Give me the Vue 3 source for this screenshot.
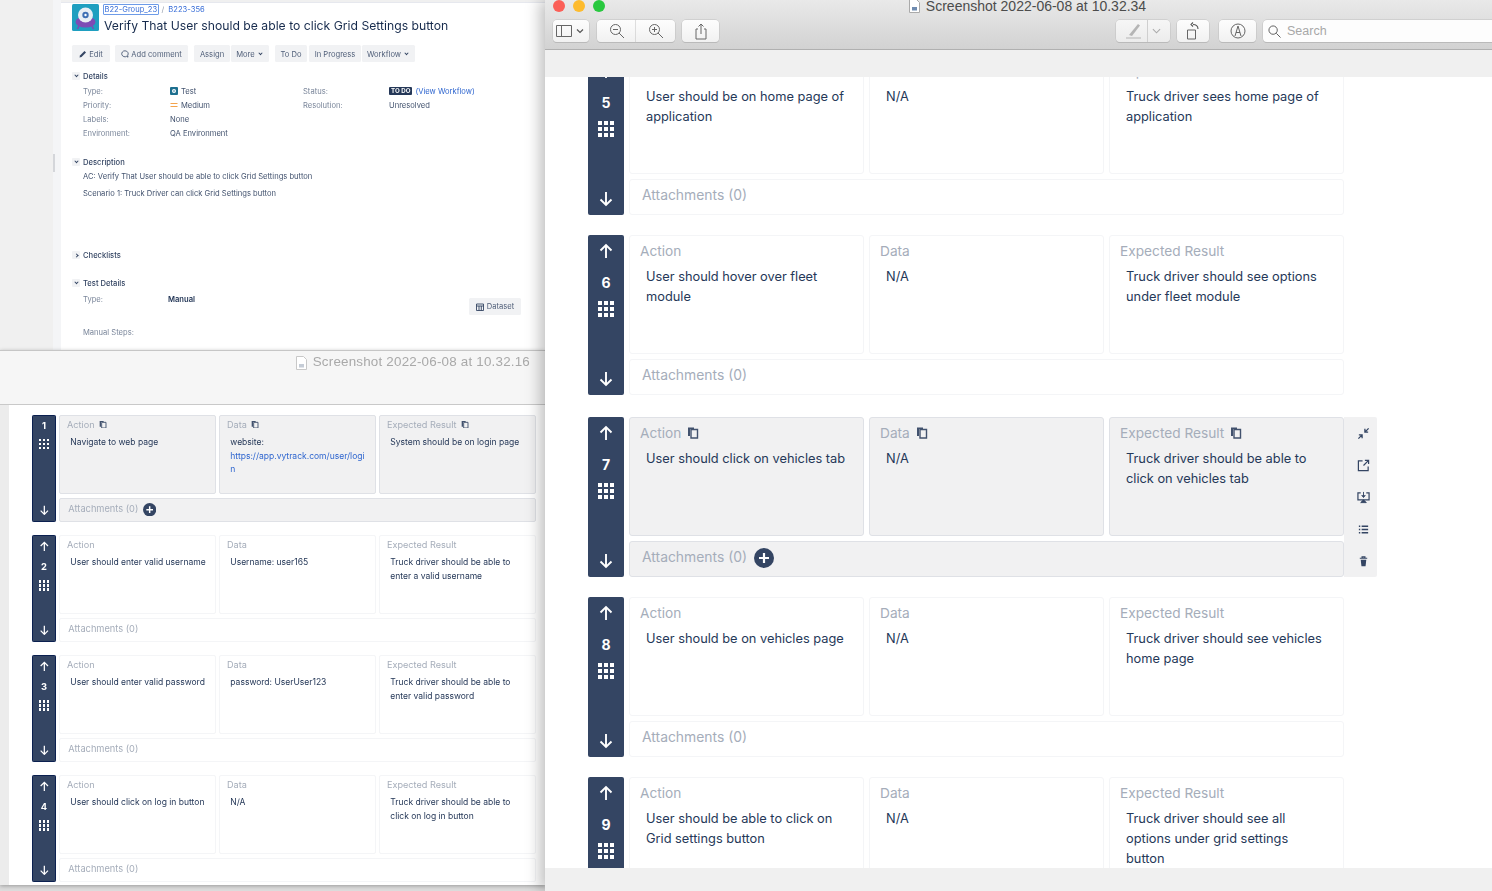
<script setup>
const leftRows = [
  { n: 1, action: 'Navigate to web page', data: 'website:', link: 'https://app.vytrack.com/user/login', result: 'System should be on login page', active: true, first: true },
  { n: 2, action: 'User should enter valid username', data: 'Username: user165', result: 'Truck driver should be able to enter a valid username' },
  { n: 3, action: 'User should enter valid password', data: 'password: UserUser123', result: 'Truck driver should be able to enter valid password' },
  { n: 4, action: 'User should click on log in button', data: 'N/A', result: 'Truck driver should be able to click on log in button' },
]

const rightRows = [
  { n: 5, action: 'User should be on home page of application', data: 'N/A', result: 'Truck driver sees home page of application' },
  { n: 6, action: 'User should hover over fleet module', data: 'N/A', result: 'Truck driver should see options under fleet module' },
  { n: 7, action: 'User should click on vehicles tab', data: 'N/A', result: 'Truck driver should be able to click on vehicles tab', active: true, tools: true },
  { n: 8, action: 'User should be on vehicles page', data: 'N/A', result: 'Truck driver should see vehicles home page' },
  { n: 9, action: 'User should be able to click on Grid settings button', data: 'N/A', result: 'Truck driver should see all options under grid settings button' },
]

const lists = [
  { id: 'left', rows: leftRows },
  { id: 'right', rows: rightRows },
]

const columns = [
  { key: 'action', label: 'Action' },
  { key: 'data', label: 'Data' },
  { key: 'result', label: 'Expected Result' },
]
</script>

<template>
  <div class="desktop">
    <!-- jira issue screenshot -->
    <section class="win jira">
      <div class="jira__gutter"><span class="jira__grip"></span></div>
      <div class="jira__page">
        <header class="issue">
          <svg class="issue__logo" viewBox="0 0 27 27">
            <rect width="27" height="27" rx="1.5" fill="#1f9fc0" />
            <ellipse cx="13.5" cy="18" rx="10" ry="5.5" fill="#7d4cb5" />
            <path d="M7 22l-1.5 3M20 22l1.5 3" stroke="#7d4cb5" stroke-width="1.6" />
            <circle cx="13.5" cy="11" r="7.5" fill="#e9eef5" />
            <circle cx="13.5" cy="11" r="3.2" fill="#3f6fb5" />
            <circle cx="13.5" cy="11" r="1.2" fill="#fff" />
          </svg>
          <div>
            <div class="crumbs">
              <a class="crumbs__focus">B22-Group_23</a>
              <span class="crumbs__sep">/</span>
              <a>B223-356</a>
            </div>
            <h1 class="issue__title">Verify That User should be able to click Grid Settings button</h1>
          </div>
        </header>

        <nav class="actions">
          <span class="btn btn--edit">
            <svg viewBox="0 0 8 8" class="btn__ico"><path d="M0.5 7.5l.5-2L5.5 1l1.5 1.5L2.5 7z" fill="#344563" /></svg>
            Edit
          </span>
          <span class="btn btn--comment">
            <svg viewBox="0 0 8 8" class="btn__ico"><path d="M4 .8a3.2 3 0 1 0 1.7 5.5L7 7.2l-.3-1.8A3.2 3 0 0 0 4 .8z" fill="none" stroke="#344563" stroke-width=".8" /></svg>
            Add comment
          </span>
          <span class="btn btn--assign">Assign</span>
          <span class="btn btn--more">More <i class="chev"></i></span>
          <span class="btn btn--todo">To Do</span>
          <span class="btn btn--prog">In Progress</span>
          <span class="btn btn--flow">Workflow <i class="chev"></i></span>
        </nav>

        <h2 class="sec sec--details"><span class="sec__tog"><i class="chev"></i></span>Details</h2>
        <div class="fields">
          <span class="lbl">Type:</span>
          <span class="val">
            <svg class="type-ico" viewBox="0 0 8 8"><rect width="8" height="8" rx="1" fill="#1d6f8f" /><circle cx="4" cy="4" r="2" fill="#fff" /><circle cx="4" cy="4" r=".8" fill="#1d6f8f" /></svg>
            Test
          </span>
          <span class="lbl">Status:</span>
          <span class="val"><b class="lozenge">TO DO</b> <a class="link">(View Workflow)</a></span>
          <span class="lbl">Priority:</span>
          <span class="val">
            <svg class="type-ico" viewBox="0 0 8 8"><path d="M0.5 2.5h7M0.5 5.5h7" stroke="#f4a34c" stroke-width="1.2" /></svg>
            Medium
          </span>
          <span class="lbl">Resolution:</span>
          <span class="val">Unresolved</span>
          <span class="lbl">Labels:</span>
          <span class="val val--wide">None</span>
          <span class="lbl">Environment:</span>
          <span class="val val--wide">QA Environment</span>
        </div>

        <h2 class="sec sec--desc"><span class="sec__tog"><i class="chev"></i></span>Description</h2>
        <p class="desc">AC: Verify That User should be able to click Grid Settings button</p>
        <p class="desc desc--2">Scenario 1: Truck Driver can click Grid Settings button</p>

        <h2 class="sec sec--check"><span class="sec__tog"><i class="chev chev--right"></i></span>Checklists</h2>
        <h2 class="sec sec--test"><span class="sec__tog"><i class="chev"></i></span>Test Details</h2>
        <div class="test-row">
          <span class="lbl test-row__lbl">Type:</span>
          <b class="test-row__val">Manual</b>
          <span class="dataset">
            <svg viewBox="0 0 8 8" class="btn__ico"><path d="M.5 1h7v6.5h-7zM.5 3h7M3 3v4.5M5.3 3v4.5" fill="none" stroke="#344563" stroke-width=".9" /></svg>
            Dataset
          </span>
        </div>
        <div class="lbl steps-lbl">Manual Steps:</div>
      </div>
      <span class="jira__tab"></span>
    </section>

    <template v-for="list in lists" :key="list.id">
      <section class="win" :class="list.id === 'left' ? 'left' : 'preview'">
        <template v-if="list.id === 'left'">
          <div class="left__bar">
            <svg class="file" viewBox="0 0 11 14"><path d="M.5.5h7l3 3v10H.5z" fill="#fff" stroke="#c8c8c8" /><rect x="3" y="8" width="5" height="3.5" fill="#c5ccd6" /></svg>
            Screenshot 2022-06-08 at 10.32.16
          </div>
        </template>
        <template v-else>
          <div class="mac">
            <div class="mac__title">
              <i class="light light--r"></i><i class="light light--y"></i><i class="light light--g"></i>
              <svg class="file file--dark" viewBox="0 0 11 14"><path d="M.5.5h7l3 3v10H.5z" fill="#fff" stroke="#aaa" /><rect x="3" y="8" width="5" height="3.5" fill="#6f8bb0" /></svg>
              <span>Screenshot 2022-06-08 at 10.32.34</span>
            </div>
            <div class="mac__tools">
              <span class="tool tool--side">
                <svg viewBox="0 0 30 14" width="30" height="14"><path d="M.5 1.5h15v11H.5zM5.5 1.5v11" fill="none" stroke="#666" /><path d="M21 5.5l3 3 3-3" fill="none" stroke="#555" stroke-width="1.2" /></svg>
              </span>
              <span class="tool tool--zoom">
                <svg viewBox="0 0 16 16" width="16" height="16"><circle cx="6.5" cy="6.5" r="5" fill="none" stroke="#666" /><path d="M10 10l5 5M4 6.5h5" stroke="#666" /></svg>
              </span>
              <span class="tool tool--zoom tool--joined">
                <svg viewBox="0 0 16 16" width="16" height="16"><circle cx="6.5" cy="6.5" r="5" fill="none" stroke="#666" /><path d="M10 10l5 5M4 6.5h5M6.5 4v5" stroke="#666" /></svg>
              </span>
              <span class="tool tool--share">
                <svg viewBox="0 0 14 17" width="14" height="17"><path d="M4 6H2v10h10V6h-2M7 11V1M4.5 3.500L7 1l2.500 2.500" fill="none" stroke="#666" /></svg>
              </span>
              <span class="mac__space"></span>
              <span class="tool tool--pen">
                <svg viewBox="0 0 18 16" width="18" height="16"><path d="M4 12L13 1l2 1.5L7 13z" fill="#b5b5b5" /><path d="M1 15h15" stroke="#c4c4c4" stroke-width="1.4" /></svg>
                <i class="tool__split"></i>
                <svg viewBox="0 0 10 6" width="9" height="6"><path d="M1 1l4 4 4-4" fill="none" stroke="#aaa" stroke-width="1.2" /></svg>
              </span>
              <span class="tool tool--rotate">
                <svg viewBox="0 0 16 18" width="16" height="18"><path d="M2.500 8h8v9h-8z" fill="none" stroke="#666" /><path d="M13 7c0-3-2-4.500-5-4.500M8 .5l-2 2 2 2" fill="none" stroke="#555" stroke-width="1.100" /></svg>
              </span>
              <span class="tool tool--markup">
                <svg viewBox="0 0 16 16" width="16" height="16"><circle cx="8" cy="8" r="7" fill="none" stroke="#666" /><path d="M5 13L8 3l3 10M6 9.500h4" fill="none" stroke="#666" /></svg>
              </span>
              <span class="search">
                <svg viewBox="0 0 14 14" width="13" height="13"><circle cx="5.500" cy="5.500" r="4.500" fill="none" stroke="#555" /><path d="M9 9l4.500 4.500" stroke="#555" /></svg>
                Search
              </span>
            </div>
          </div>
          <div class="mac__strip"></div>
        </template>

        <!-- test steps -->
        <div class="viewport">
          <div class="steps" :class="'steps--' + list.id">
            <article
              v-for="row in list.rows"
              :key="row.n"
              class="row"
              :class="{ row_active: row.active }"
            >
              <div class="rail">
                <svg v-if="!row.first" class="rail__arrow" viewBox="0 0 16 16"><path d="M8 15V2M2.500 7.500L8 2l5.500 5.500" fill="none" stroke="#fff" stroke-width="1.900" /></svg>
                <span class="rail__num">{{ row.n }}</span>
                <span class="dots"><i v-for="d in 9" :key="d"></i></span>
                <svg class="rail__arrow rail__arrow_down" viewBox="0 0 16 16"><path d="M8 1v13M2.500 8.500L8 14l5.500-5.500" fill="none" stroke="#fff" stroke-width="1.900" /></svg>
              </div>
              <div class="row__main">
                <div class="cells">
                  <div v-for="col in columns" :key="col.key" class="cell">
                    <div class="cell__label">
                      {{ col.label }}
                      <svg v-if="row.active" class="copy" viewBox="0 0 12 13">
                        <path d="M1 1.500h6v1.500H3v7H1z" fill="#42526e" />
                        <path d="M4 3.500h6.500v8.500H4z" fill="none" stroke="#42526e" stroke-width="1.400" />
                      </svg>
                    </div>
                    <div class="cell__text">
                      {{ row[col.key] }}
                      <a v-if="col.key === 'data' && row.link" class="cell__link">{{ row.link }}</a>
                    </div>
                  </div>
                </div>
                <div class="attach">
                  Attachments (0)
                  <svg v-if="row.active" class="attach__add" viewBox="0 0 20 20">
                    <circle cx="10" cy="10" r="10" fill="#344563" />
                    <path d="M10 5v10M5 10h10" stroke="#fff" stroke-width="2.200" />
                  </svg>
                </div>
              </div>
              <aside v-if="row.tools" class="panel">
                <svg viewBox="0 0 14 14"><path d="M8.500 5.500l4-4M8.500 2v3.500H12M5.500 8.500l-4 4M2 8.500h3.500V12" fill="none" stroke="#344563" stroke-width="1.400" /></svg>
                <svg viewBox="0 0 14 14"><path d="M6 2H1.500v10.500H12V8M7 7l5.500-5.500M8.500 1.500h4v4" fill="none" stroke="#344563" stroke-width="1.300" /></svg>
                <svg viewBox="0 0 14 14"><path d="M4 2H1v7.500h12V2h-3" fill="none" stroke="#344563" stroke-width="1.300" /><path d="M7 1v5M5 4.500L7 7l2-2.500M4 12.500h6L7 9.500z" fill="#344563" stroke="#344563" /></svg>
                <svg viewBox="0 0 14 14"><path d="M5 3.500h7M5 7h7M5 10.500h7M2 3.500h1.500M2 7h1.500M2 10.500h1.500" stroke="#344563" stroke-width="1.500" /></svg>
                <svg viewBox="0 0 14 14"><path d="M3 3.500h8M5.500 3.500V2h3v1.500" fill="none" stroke="#344563" stroke-width="1.300" /><path d="M4 5h6l-.8 7H4.800z" fill="#344563" /></svg>
              </aside>
            </article>
          </div>
        </div>
      </section>
    </template>
  </div>
</template>

<style>
html,
body {
  margin: 0;
  overflow: hidden;
}
</style>

<style scoped>
.desktop {
  position: relative;
  width: 1492px;
  height: 891px;
  overflow: hidden;
  background: #dcdcdc;
  font-family: Inter, "Liberation Sans", sans-serif;
  color: #253858;
}

.win {
  position: absolute;
  overflow: hidden;
}

/* jira */
.jira {
  left: 0;
  top: 0;
  width: 545px;
  height: 351px;
  display: flex;
  background: #f0f0f0;
  padding-left: 53px;
  box-sizing: border-box;
  filter: blur(0.35px);
}

.jira__gutter {
  width: 8px;
  background: #f4f5f7;
  position: relative;
  flex: none;
}

.jira__grip {
  position: absolute;
  left: 0;
  top: 154px;
  width: 2px;
  height: 18px;
  background: #d4d6da;
}

.jira__page {
  flex: 1;
  background: #fff;
  margin-top: 2px;
  border-top: 1px solid #e6e8ee;
  padding-left: 11px;
  padding-right: 24px;
  font-size: 7.6px;
  color: #42526e;
}

.jira__tab {
  position: absolute;
  left: 432px;
  bottom: 0;
  width: 63px;
  height: 1px;
  background: #2b4f9e;
}

.issue {
  display: flex;
  gap: 5px;
  height: 27px;
  padding-top: 1px;
}

.issue__logo {
  width: 27px;
  height: 27px;
  flex: none;
}

.crumbs {
  display: flex;
  align-items: center;
  gap: 3px;
  height: 11px;
  font-size: 7.6px;
  color: #3a6fd8;
  margin-left: -1px;
}

.crumbs__focus {
  border: 1px solid #6d9be8;
  padding: 0 0.5px;
  line-height: 9px;
  border-radius: 1px;
}

.crumbs__sep {
  color: #97a0af;
  margin-right: 1px;
}

.issue__title {
  margin: 3px 0 0;
  font-size: 12.2px;
  font-weight: 400;
  line-height: 16px;
  color: #172b4d;
  white-space: nowrap;
}

.actions {
  display: flex;
  margin-top: 14px;
  height: 17px;
}

.btn {
  display: flex;
  align-items: center;
  justify-content: center;
  gap: 2px;
  height: 17px;
  padding-top: 1px;
  background: #f1f2f4;
  border-radius: 1.5px;
  color: #505f79;
  box-sizing: border-box;
}

.btn--edit { width: 38px; }
.btn--comment { width: 73px; margin-left: 5px; }
.btn--assign { width: 36px; margin-left: 6px; }
.btn--more { width: 38px; margin-left: 1px; }
.btn--todo { width: 32px; margin-left: 6px; }
.btn--prog { width: 52px; margin-left: 2px; }
.btn--flow { width: 53px; margin-left: 1px; }

.btn__ico {
  width: 8px;
  height: 8px;
}

.chev {
  display: inline-block;
  width: 2px;
  height: 2px;
  border-right: 1px solid #344563;
  border-bottom: 1px solid #344563;
  transform: rotate(45deg) translate(-1px, -1px);
  margin: 0 2px;
}

.chev--right {
  transform: rotate(-45deg);
}

.sec {
  display: flex;
  align-items: center;
  gap: 3px;
  height: 14px;
  margin: 0;
  font-size: 7.6px;
  font-weight: 500;
  color: #344563;
}

.sec__tog {
  display: flex;
  align-items: center;
  justify-content: center;
  width: 8px;
  height: 8px;
  background: #f1f2f4;
  border-radius: 1px;
}

.sec__tog .chev {
  margin: 0;
  border-width: 0.8px;
}

.sec--details { margin-top: 7px; }
.sec--desc { margin-top: 15px; }
.sec--check { margin-top: 47px; }
.sec--test { margin-top: 14px; }

.fields {
  display: grid;
  grid-template-columns: 87px 133px 86px auto;
  grid-auto-rows: 14px;
  align-items: center;
  padding-left: 11px;
  margin-top: 1px;
}

.lbl {
  color: #7a869a;
}

.val {
  display: flex;
  align-items: center;
  gap: 3px;
  color: #42526e;
}

.val--wide {
  grid-column: span 3;
}

.type-ico {
  width: 8px;
  height: 8px;
}

.lozenge {
  background: #253858;
  color: #fff;
  font-size: 6.2px;
  font-weight: 700;
  padding: 0 2px;
  line-height: 8px;
  border-radius: 1px;
}

.link {
  color: #2f66cf;
}

.desc {
  margin: 1px 0 0;
  padding-left: 11px;
  line-height: 14px;
}

.desc--2 {
  margin-top: 3px;
}

.test-row {
  display: flex;
  padding-left: 11px;
  margin-top: 3px;
  height: 23px;
}

.test-row__lbl {
  width: 85px;
  line-height: 14px;
}

.test-row__val {
  line-height: 14px;
  font-weight: 600;
  color: #253858;
}

.dataset {
  display: flex;
  align-items: center;
  justify-content: center;
  gap: 3px;
  margin-left: auto;
  margin-top: 5px;
  width: 52px;
  height: 17px;
  background: #f1f2f4;
  border-radius: 1.5px;
  color: #505f79;
}

.steps-lbl {
  padding-left: 11px;
  margin-top: 10px;
  line-height: 14px;
}

/* lower left window */
.left {
  left: 0;
  top: 350px;
  width: 545px;
  height: 535px;
  display: flex;
  flex-direction: column;
  background: #fff;
  border-top: 1px solid #c6c6c6;
  box-sizing: border-box;
  box-shadow: 0 1px 4px rgba(0, 0, 0, 0.3);
  filter: blur(0.35px);
}

.left__bar {
  display: flex;
  justify-content: flex-end;
  gap: 6px;
  height: 54px;
  padding: 2px 15px 0 0;
  box-sizing: border-box;
  background: #f6f6f6;
  border-bottom: 1px solid #c9c9c9;
  font-family: "Liberation Sans", sans-serif;
  font-size: 13.4px;
  line-height: 17px;
  letter-spacing: 0.2px;
  color: #a9a9a9;
}

.file {
  width: 11px;
  height: 14px;
  margin-top: 3px;
  flex: none;
}

/* preview window */
.preview {
  left: 545px;
  top: 0;
  width: 947px;
  height: 891px;
  display: flex;
  flex-direction: column;
  background: #f0f0f0;
  box-shadow: -5px 0 14px rgba(0, 0, 0, 0.25);
  overflow: visible;
}

.mac {
  height: 50px;
  flex: none;
  background: linear-gradient(#e9e9e9, #d2d2d2);
  border-bottom: 1px solid #b0b0b0;
  box-sizing: border-box;
  font-family: "Liberation Sans", sans-serif;
  overflow: hidden;
}

.mac__title {
  position: relative;
  display: flex;
  justify-content: center;
  align-items: center;
  gap: 6px;
  height: 12px;
  font-size: 14px;
  line-height: 12px;
  color: #4c4c4c;
  padding-left: 18px;
}

.file--dark {
  margin-top: 0;
}

.light {
  position: absolute;
  top: 0;
  width: 12px;
  height: 12px;
  border-radius: 50%;
}

.light--r { left: 8px; background: #fb5f57; }
.light--y { left: 28px; background: #fdbb2e; }
.light--g { left: 48px; background: #29c83f; }

.mac__tools {
  display: flex;
  padding: 8px 0 0 8px;
  height: 22px;
}

.mac__space {
  flex: 1;
}

.tool {
  display: flex;
  align-items: center;
  justify-content: center;
  gap: 3px;
  height: 22px;
  box-sizing: border-box;
  background: linear-gradient(#fdfdfd, #f1f1f1);
  border-radius: 4px;
  box-shadow: 0 0 0 0.5px #c0c0c0, 0 1px 0 #b5b5b5;
}

.tool--side { width: 36px; }
.tool--zoom { width: 39px; margin-left: 8px; border-radius: 4px 0 0 4px; }
.tool--joined { margin-left: 0; border-radius: 0 4px 4px 0; }
.tool--share { width: 37px; margin-left: 7px; }
.tool--pen { width: 54px; gap: 4px; background: linear-gradient(#f6f6f6, #ececec); }
.tool--rotate { width: 32px; margin-left: 7px; }
.tool--markup { width: 37px; margin-left: 10px; }

.tool__split {
  width: 1px;
  height: 22px;
  background: #cfcfcf;
}

.search {
  display: flex;
  align-items: center;
  gap: 6px;
  width: 229px;
  height: 22px;
  margin-left: 7px;
  padding-left: 5px;
  box-sizing: border-box;
  background: #fdfdfd;
  border-radius: 4px 0 0 4px;
  box-shadow: 0 0 0 0.5px #c0c0c0, 0 1px 0 #b5b5b5;
  font-size: 12.5px;
  color: #a8a8a8;
}

.mac__strip {
  height: 27px;
  flex: none;
}

.viewport {
  overflow: hidden;
  background: #fff;
}

.left .viewport {
  flex: 1;
  background: linear-gradient(to right, #ececec 9px, #fff 9px);
}

.preview .viewport {
  height: 791px;
  flex: none;
}

/* steps, drawn at full size and scaled down in the left window */
.steps {
  display: flex;
  flex-direction: column;
  gap: 20px;
  color: #253858;
}

.steps--right {
  margin-top: -22px;
  padding-left: 43px;
}

.steps--right .row_active {
  margin-top: 2px;
}

.steps--left {
  zoom: 0.6667;
  padding: 15px 0 0 48px;
}

.steps--left .rail {
  border: 1px solid #0b2050;
}

.steps--left .rail__num {
  line-height: 30px;
}

.steps--left .cell {
  padding: 3px 8px 0 10px;
}

.steps--left .cell__text {
  padding-left: 5px;
  margin-top: 7.4px;
}

.steps--left .attach {
  padding-bottom: 3px;
}

.steps--left .row:not(.row_active) .cell,
.steps--left .row:not(.row_active) .attach {
  border-color: #f4f5f7;
}

.row {
  display: flex;
  gap: 5px;
  height: 160px;
  flex: none;
}

.rail {
  display: flex;
  flex-direction: column;
  align-items: center;
  width: 36px;
  height: 160px;
  flex: none;
  box-sizing: border-box;
  background: #344563;
  border-radius: 2px;
  color: #fff;
}

.rail__arrow {
  width: 16px;
  height: 16px;
  margin: 8px 0;
  flex: none;
}

.rail__arrow_down {
  margin-top: auto;
}

.rail__num {
  height: 30px;
  line-height: 32px;
  font-size: 14px;
  font-weight: 700;
}

.dots {
  display: grid;
  grid-template-columns: repeat(3, 4px);
  grid-auto-rows: 4px;
  gap: 2px;
  margin-top: 4px;
}

.dots i {
  background: #fff;
}

.row__main {
  display: flex;
  flex-direction: column;
  gap: 5px;
  width: 715px;
  flex: none;
}

.cells {
  display: flex;
  gap: 5px;
  height: 119px;
}

.cell,
.attach {
  border: 1px solid #f4f5f7;
  border-radius: 3px;
  box-sizing: border-box;
}

.cell {
  width: 235px;
  padding: 5px 15px 0 10px;
}

.row_active .cell,
.row_active .attach {
  background: #f1f1f2;
  border-color: #dfe1e6;
}

.cell__label {
  display: flex;
  align-items: center;
  gap: 6px;
  height: 20px;
  font-size: 13.7px;
  color: #a5adba;
}

.copy {
  width: 12px;
  height: 13px;
  margin-top: -2px;
}

.cell__text {
  margin-top: 6px;
  padding-left: 6px;
  font-size: 12.8px;
  line-height: 20px;
}

.cell__link {
  display: block;
  padding-right: 4px;
  color: #2f66cf;
  word-break: break-all;
}

.attach {
  display: flex;
  align-items: center;
  gap: 7px;
  height: 36px;
  padding: 0 0 5px 12px;
  font-size: 13.9px;
  color: #a5adba;
}

.attach__add {
  width: 20px;
  height: 20px;
  margin-top: 3px;
}

.panel {
  display: flex;
  flex-direction: column;
  align-items: center;
  justify-content: space-between;
  width: 33px;
  margin-left: -5px;
  padding: 9.5px 0 9.5px 5px;
  box-sizing: border-box;
  background: #f1f1f2;
  border-radius: 0 2px 2px 0;
}

.panel svg {
  width: 13px;
  height: 13px;
}
</style>
